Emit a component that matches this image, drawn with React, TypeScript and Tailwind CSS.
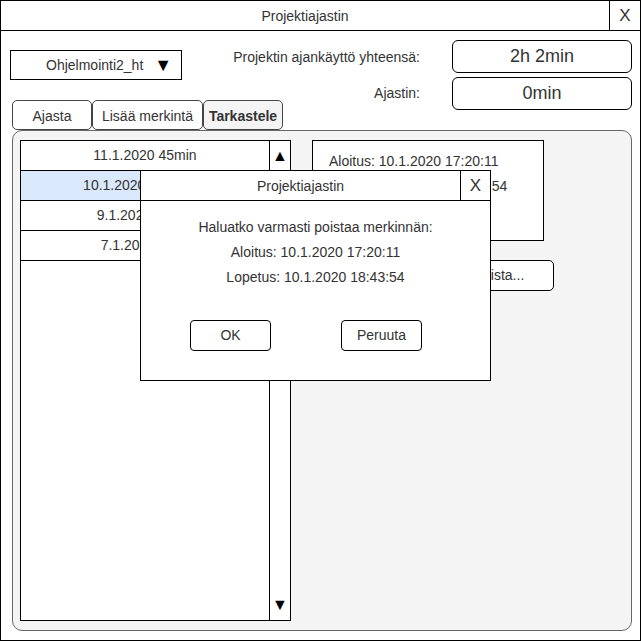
import React from 'react'

// ─── Small pieces ─────────────────────────────────────────────────────────────

function Tab({ label, active }: { label: string; active?: boolean }) {
  return (
    <div
      className={
        'flex h-[30px] items-center justify-center rounded-[5px] border border-[#444] pt-[2px] text-[14px] ' +
        (active ? 'bg-[#f4f4f4] font-bold' : 'bg-white')
      }
    >
      {label}
    </div>
  )
}

const rows = [
  { text: '11.1.2020 45min', selected: false },
  { text: '10.1.2020 1h 23min', selected: true },
  { text: '9.1.2020 30min', selected: false },
  { text: '7.1.2020 5min', selected: false },
]

function EntryList() {
  return (
    <div className="flex h-[481px] w-[271px] border border-black bg-white">
      <div className="flex flex-1 flex-col">
        {rows.map((r) => (
          <div
            key={r.text}
            className={
              'flex h-[30px] items-center justify-center border-b border-black text-[14px] ' +
              (r.selected ? 'bg-[#dae8fc]' : 'bg-white')
            }
          >
            {r.text}
          </div>
        ))}
      </div>
      <div className="flex w-[21px] flex-col justify-between border-l border-black">
        <div className="flex h-[30px] items-center justify-center border-b border-black text-[16px] leading-none text-black">
          ▲
        </div>
        <div className="flex h-[30px] items-center justify-center text-[16px] leading-none text-black">▼</div>
      </div>
    </div>
  )
}

// ─── Confirm dialog ───────────────────────────────────────────────────────────

function ConfirmDialog() {
  return (
    <div className="absolute left-[139px] top-[169px] flex h-[211px] w-[351px] flex-col border border-black bg-white">
      <div className="flex h-[30px] border-b border-black">
        <div className="flex flex-1 items-center justify-center pt-[1px] text-[14px]">Projektiajastin</div>
        <div className="flex w-[30px] items-center justify-center border-l border-black text-[17px]">X</div>
      </div>
      <div className="flex flex-col items-center pt-[14px] text-[14px] leading-[25px]">
        <div>Haluatko varmasti poistaa merkinnän:</div>
        <div>Aloitus: 10.1.2020 17:20:11</div>
        <div>Lopetus: 10.1.2020 18:43:54</div>
      </div>
      <div className="mt-[30px] flex gap-[70px] pl-[49px]">
        <button className="flex h-[31px] w-[81px] items-center justify-center rounded-[4px] border border-black bg-white text-[14px]">
          OK
        </button>
        <button className="flex h-[31px] w-[81px] items-center justify-center rounded-[4px] border border-black bg-white text-[14px]">
          Peruuta
        </button>
      </div>
    </div>
  )
}

// ─── Page ─────────────────────────────────────────────────────────────────────

export default function App() {
  return (
    <div
      className="relative flex h-[641px] w-[641px] flex-col border border-black bg-white text-[#333]"
      style={{ fontFamily: '"Liberation Sans", Arial, sans-serif' }}
    >
      {/* Window title */}
      <div className="flex h-[30px] shrink-0 border-b border-black">
        <div className="flex flex-1 items-center justify-center pt-[1px] text-[14px]">Projektiajastin</div>
        <div className="flex w-[31px] items-center justify-center border-l border-black text-[17px]">X</div>
      </div>

      {/* Header: project picker, tabs, totals */}
      <div className="flex h-[99px] shrink-0">
        <div className="flex w-[182px] shrink-0 flex-col pl-[9px] pt-[19px]">
          <div className="flex h-[30px] w-[172px] items-center border border-black pl-[35px] text-[14px]">
            <span className="flex-1">Ohjelmointi2_ht</span>
            <span className="pr-[9px] text-[18px] leading-none text-black">▼</span>
          </div>
          <div className="ml-[2px] mt-[20px] flex w-max">
            <div className="w-[80px]">
              <Tab label="Ajasta" />
            </div>
            <div className="w-[111px]">
              <Tab label="Lisää merkintä" />
            </div>
            <div className="w-[80px]">
              <Tab label="Tarkastele" active />
            </div>
          </div>
        </div>

        <div className="flex flex-1 flex-col gap-[4px] pr-[8px] pt-[9px]">
          <div className="flex items-center justify-end gap-[32px]">
            <span className="whitespace-nowrap pt-[2px] text-[14px]">Projektin ajankäyttö yhteensä:</span>
            <div className="flex h-[33px] w-[180px] shrink-0 items-center justify-center rounded-[6px] border border-black text-[18px]">
              2h 2min
            </div>
          </div>
          <div className="flex items-center justify-end gap-[32px]">
            <span className="whitespace-nowrap text-[14px]">Ajastin:</span>
            <div className="flex h-[33px] w-[180px] shrink-0 items-center justify-center rounded-[6px] border border-black text-[18px]">
              0min
            </div>
          </div>
        </div>
      </div>

      {/* Tab panel */}
      <div className="mb-[9px] ml-[11px] mr-[8px] flex flex-1 gap-[21px] rounded-[10px] border border-[#666] bg-[#f4f4f4] pl-[7px] pt-[9px]">
        <EntryList />
        <div className="flex flex-col">
          <div className="flex h-[101px] w-[232px] flex-col border border-black bg-white pl-[16px] pt-[8px] text-[14px] leading-[25px]">
            <div>Aloitus: 10.1.2020 17:20:11</div>
            <div>Lopetus: 10.1.2020 18:43:54</div>
          </div>
          <button className="ml-[132px] mt-[19px] flex h-[31px] w-[110px] items-center justify-center rounded-[5px] border border-black bg-white text-[14px]">
            Poista...
          </button>
        </div>
      </div>

      <ConfirmDialog />
    </div>
  )
}
